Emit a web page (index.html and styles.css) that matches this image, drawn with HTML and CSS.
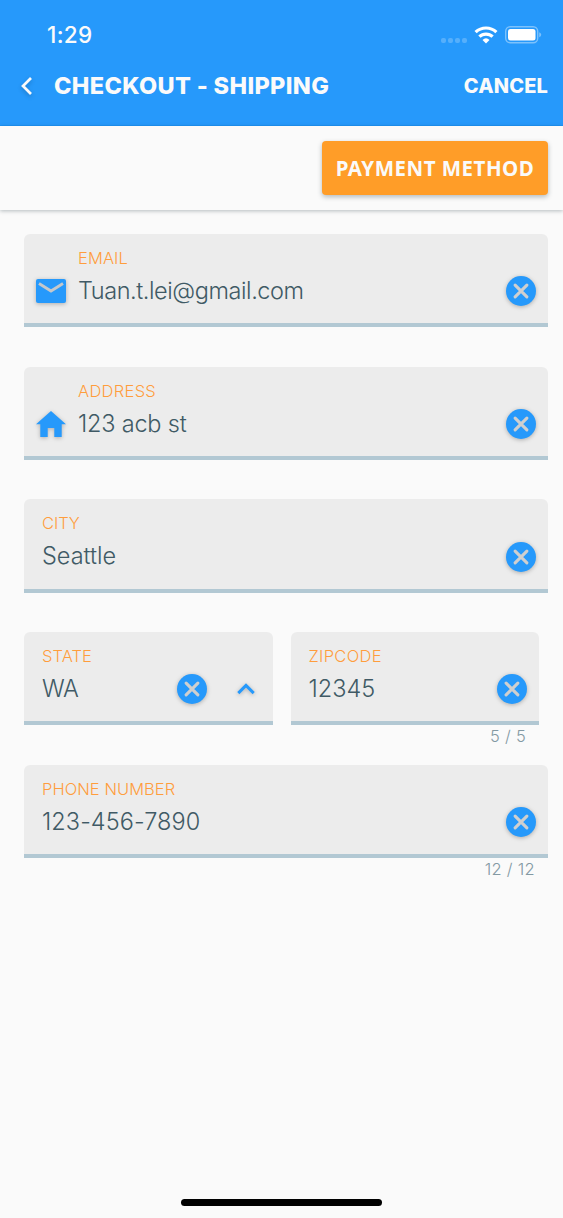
FILE: index.html
```html
<!DOCTYPE html>
<html lang="en">
<head>
<meta charset="utf-8">
<title>Checkout - Shipping</title>
<link rel="stylesheet" href="styles.css">
</head>
<body>
<svg class="defs" aria-hidden="true">
  <symbol id="clear" viewBox="0 0 30 30">
    <circle cx="15" cy="15" r="15"/>
    <path d="M9.1 9.1 20.9 20.9M20.9 9.1 9.1 20.9" fill="none" stroke="#cfcfcf" stroke-width="3.1" stroke-linecap="round"/>
  </symbol>
</svg>
<div class="screen">
  <header class="header">
    <div class="status">
      <span class="time">1:29</span>
      <svg class="status-icons" width="101" height="20" viewBox="0 0 101 20">
        <g fill="#fff" opacity=".22"><rect x="1" y="11" width="5" height="5" rx="2"/><rect x="8" y="11" width="5" height="5" rx="2"/><rect x="15" y="11" width="5" height="5" rx="2"/><rect x="22" y="11" width="5" height="5" rx="2"/></g>
        <g fill="none" stroke="#fff" stroke-width="3.2"><path d="M35.6 5.2a15 15 0 0 1 20.800 0"/><path d="M39.400 9.700a9.500 9.500 0 0 1 13.200 0"/></g>
        <path d="M42.500 12.900a5.200 5.200 0 0 1 7 0L46 16.400z" fill="#fff"/>
        <rect x="65.700" y="-.3" width="32" height="16" rx="4.500" fill="none" stroke="#fff" stroke-opacity=".4" stroke-width="1.400"/>
        <rect x="68" y="2" width="27.500" height="11.500" rx="2.500" fill="#fff"/>
        <path d="M99.200 5.200q2 .8 2 2.500t-2 2.500z" fill="#fff" opacity=".4"/>
      </svg>
    </div>
    <nav class="navbar">
      <svg class="back" width="14" height="20" viewBox="0 0 14 20"><path d="M12 2 4 10l8 8" fill="none" stroke="#fafafa" stroke-width="2.700"/></svg>
      <h1 class="title">CHECKOUT - SHIPPING</h1>
      <a class="cancel">CANCEL</a>
    </nav>
  </header>
  <div class="toolbar"><button class="payment">PAYMENT METHOD</button></div>
  <main class="form">
    <div class="row">
      <div class="field with-icon">
        <svg class="lead mail" width="30" height="24" viewBox="0 0 30 24"><rect width="30" height="24" rx="2"/><path d="M3 4.500 15 12l12-7.500" fill="none" stroke="#c5c8cb" stroke-width="2.900"/></svg>
        <div class="text"><span class="label l-email">EMAIL</span><span class="value v-email">Tuan.t.lei@gmail.com</span></div>
        <svg class="clear"><use href="#clear"/></svg>
      </div>
    </div>
    <div class="row">
      <div class="field with-icon">
        <svg class="lead" width="30" height="26" viewBox="0 0 30 26"><path d="M15 0 30 13.300h-4.300V26h-7.400v-9h-6.600v9H4.300V13.300H0z"/></svg>
        <div class="text"><span class="label">ADDRESS</span><span class="value v-address">123 acb st</span></div>
        <svg class="clear"><use href="#clear"/></svg>
      </div>
    </div>
    <div class="row">
      <div class="field">
        <div class="text"><span class="label l-city">CITY</span><span class="value">Seattle</span></div>
        <svg class="clear"><use href="#clear"/></svg>
      </div>
    </div>
    <div class="row split">
      <div class="cell">
        <div class="field state">
          <div class="text"><span class="label l-state">STATE</span><span class="value v-state">WA</span></div>
          <svg class="clear"><use href="#clear"/></svg>
          <svg class="chevron" width="18" height="12" viewBox="0 0 18 12"><path d="m1.300 10.100 7.700-7.700 7.700 7.700" fill="none" stroke="#2699fb" stroke-width="3"/></svg>
        </div>
      </div>
      <div class="cell">
        <div class="field">
          <div class="text"><span class="label">ZIPCODE</span><span class="value">12345</span></div>
          <svg class="clear"><use href="#clear"/></svg>
        </div>
        <span class="counter">5 / 5</span>
      </div>
    </div>
    <div class="row">
      <div class="field">
        <div class="text"><span class="label l-phone">PHONE NUMBER</span><span class="value v-phone">123-456-7890</span></div>
        <svg class="clear"><use href="#clear"/></svg>
      </div>
      <span class="counter">12 / 12</span>
    </div>
  </main>
  <footer class="footer"><div class="home-bar"></div></footer>
</div>
</body>
</html>
```

FILE: styles.css
```css
* { box-sizing: border-box; }
body { margin: 0; background: #fafafa; font-family: Inter, "Liberation Sans", sans-serif; }
.defs { position: absolute; width: 0; height: 0; }
.screen { width: 563px; height: 1218px; display: flex; flex-direction: column; overflow: hidden; background: #fafafa; }
.header { height: 126px; background: #2699fb; color: #fafafa; border-bottom: 1px solid #1b93f8; }
.status { display: flex; justify-content: space-between; padding: 20px 22px 0 47px; height: 60px; }
.time { font-size: 22.500px; line-height: 29px; font-weight: 500; letter-spacing: .3px; }
.status-icons { margin-top: 7px; overflow: visible; }
.navbar { display: flex; align-items: center; height: 51px; padding: 0 15px 0 19px; }
.back { filter: drop-shadow(0 2px 2px #0003); }
.title { margin: 0 0 0 21px; font-size: 23.500px; line-height: 30px; font-weight: 800; letter-spacing: .350px; white-space: nowrap; }
.cancel { margin-left: auto; font-size: 20px; line-height: 30px; font-weight: 800; letter-spacing: .150px; }
.toolbar { height: 84px; padding: 15px; display: flex; justify-content: flex-end; background: #fafafa; box-shadow: 0 1px 4px #263b4455; position: relative; }
.payment { width: 226px; height: 54px; padding: 0; border: 0; border-radius: 4px; background: #ff9d28; color: #fafafa; font: 700 20.500px/53px "Noto Sans", sans-serif; letter-spacing: .5px; box-shadow: 0 2px 5px #263b4455; white-space: nowrap; }
.form { padding: 24px 15px 0 24px; flex: 1; }
.row { height: 132.700px; }
.split { display: flex; gap: 18px; }
.cell { width: 248.500px; }
.field { height: 93.400px; display: flex; background: #ececec; border-bottom: 4px solid #b2c8d3; border-radius: 6px 6px 0 0; padding-right: 12px; padding-left: 18px; }
.with-icon { padding-left: 12px; }
.field > svg { fill: #2699fb; filter: drop-shadow(0 1px 2px #0004); flex: none; overflow: visible; }
.lead { margin: 44px 12px 0 0; }
.lead.mail { margin-top: 45px; }
.text { flex: 1; display: flex; flex-direction: column; padding-top: 14px; white-space: nowrap; }
.label { color: #ff9d3c; font-size: 16.500px; line-height: 20px; font-weight: 300; letter-spacing: .3px; }
.value { color: #405a65; font-size: 23.500px; line-height: 30px; font-weight: 300; margin-top: 8px; }
.l-email { letter-spacing: .1px; }
.l-city { letter-spacing: -.1px; }
.l-state { letter-spacing: .1px; }
.l-phone { letter-spacing: .050px; }
.v-email { letter-spacing: -.430px; }
.v-address { letter-spacing: -.2px; }
.v-state { letter-spacing: -.5px; }
.v-phone { letter-spacing: .080px; }
.clear { width: 30px; height: 30px; margin-top: 42.200px; }
.state { padding-right: 18px; }
.chevron { margin: 51px 0 0 30px; }
.counter { display: block; text-align: right; padding-right: 13px; color: #8399a3; font-size: 16.500px; line-height: 23px; font-weight: 300; letter-spacing: .3px; }
.footer { height: 20px; display: flex; justify-content: center; padding-top: 1px; }
.home-bar { width: 201px; height: 7px; border-radius: 4px; background: #000; }
```
